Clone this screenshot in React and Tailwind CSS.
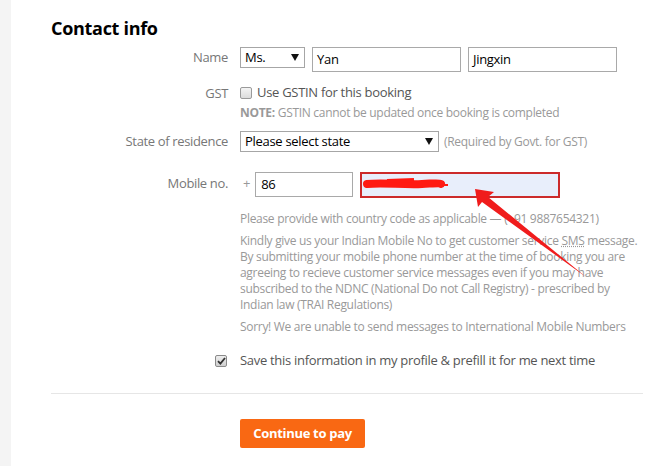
import React from "react";

const font = { fontFamily: '"Open Sans", "Noto Sans", sans-serif' };

function Caret() {
  return (
    <svg width="8" height="7" viewBox="0 0 8 7" className="shrink-0">
      <path d="M0 0 L8 0 L4 7 Z" fill="#111" />
    </svg>
  );
}

function Label({ children, className = "" }) {
  return (
    <div className={"text-right text-[13px] text-[#777] tracking-[-0.35px] " + className}>{children}</div>
  );
}

export default function App() {
  return (
    <div className="relative w-[670px] h-[466px] bg-white overflow-hidden flex tracking-[-0.3px]" style={font}>
      <div className="w-[11px] h-full bg-[#f4f4f4] shrink-0" />
      <div className="flex-1 pl-[40px] pr-[27px]">
        <h2 className="mt-[15px] text-[18px] leading-[26px] font-bold text-black tracking-[-0.3px]">Contact info</h2>

        <div className="grid grid-cols-[177px_1fr] gap-x-3 mt-[6px]">
          {/* Name */}
          <Label className="leading-[21px]">Name</Label>
          <div className="flex items-start">
            <div className="w-[65px] h-[21px] border border-[#a6a6a6] flex items-center justify-between pl-[4px] pr-[5px] text-[13px] text-black">
              <span>Ms.</span>
              <Caret />
            </div>
            <div className="ml-[7px] w-[149px] h-[25px] border border-[#a9a9a9] flex items-center pl-[4px] text-[13px] text-black">Yan</div>
            <div className="ml-[7px] w-[149px] h-[25px] border border-[#a9a9a9] flex items-center pl-[4px] text-[13px] text-black">Jingxin</div>
          </div>

          {/* GST */}
          <Label className="mt-[11px] leading-[20px]">GST</Label>
          <div className="mt-[11px]">
            <div className="flex items-center h-[20px]">
              <div className="w-[12px] h-[12px] rounded-[2px] border border-[#9a9a9a] bg-gradient-to-b from-[#f4f4f4] to-[#dcdcdc]" />
              <span className="ml-[5px] text-[13px] text-[#555]">Use GSTIN for this booking</span>
            </div>
            <div className="text-[12px] leading-[20px] text-[#999]">
              <span className="font-bold">NOTE:</span> GSTIN cannot be updated once booking is completed
            </div>
          </div>

          {/* State */}
          <Label className="mt-[8px] leading-[21px]">State of residence</Label>
          <div className="mt-[8px] flex items-center">
            <div className="w-[199px] h-[21px] border border-[#a6a6a6] flex items-center justify-between pl-[4px] pr-[5px] text-[13px] text-black">
              <span>Please select state</span>
              <Caret />
            </div>
            <span className="ml-[5px] text-[12px] text-[#999]">(Required by Govt. for GST)</span>
          </div>

          {/* Mobile */}
          <Label className="mt-[20px] leading-[22px]">Mobile no.</Label>
          <div className="mt-[20px]">
            <div className="flex items-start">
              <span className="text-[13px] text-[#999] leading-[22px] ml-[3px]">+</span>
              <div className="ml-[5px] w-[98px] h-[25px] border border-[#a9a9a9] flex items-center pl-[5px] text-[13px] text-black">86</div>
              <div className="relative ml-[7px] w-[200px] h-[26px] border-2 border-[#cc2a2a] bg-[#e8eefb]">
                <svg className="absolute left-0 top-0" width="196" height="22" viewBox="0 0 196 22">
                  <path d="M5 10 C20 8, 40 11, 60 10 S 76 9, 79 10" stroke="#ff1a12" strokeWidth="8" fill="none" strokeLinecap="round" />
                  <path d="M25 7 L52 6" stroke="#ff1a12" strokeWidth="4" fill="none" />
                  <path d="M76 11 L86 11" stroke="#ff1a12" strokeWidth="2" fill="none" />
                </svg>
              </div>
            </div>
            <div className="mt-[13px] text-[12px] leading-[16px] text-[#999] whitespace-nowrap">
              Please provide with country code as applicable — (+91 9887654321)
            </div>
            <div className="mt-[6px] text-[12px] leading-[16px] text-[#999] whitespace-nowrap">
              Kindly give us your Indian Mobile No to get customer service{" "}
              <span className="underline decoration-dotted">SMS</span> message.
              <br />
              By submitting your mobile phone number at the time of booking you are
              <br />
              agreeing to recieve customer service messages even if you may have
              <br />
              subscribed to the NDNC (National Do not Call Registry) - prescribed by
              <br />
              Indian law (TRAI Regulations)
            </div>
            <div className="mt-[6px] text-[12px] leading-[16px] text-[#999] whitespace-nowrap">
              Sorry! We are unable to send messages to International Mobile Numbers
            </div>
          </div>

          {/* Save */}
          <div className="mt-[16px] flex justify-end items-center h-[20px]">
            <div className="w-[12px] h-[12px] rounded-[2px] border border-[#8a8a8a] bg-gradient-to-b from-[#eee] to-[#cfcfcf] flex items-center justify-center mr-[1px]">
              <svg width="9" height="8" viewBox="0 0 9 8">
                <path d="M1 4.2 L3.4 6.6 L8 1" stroke="#333" strokeWidth="1.8" fill="none" />
              </svg>
            </div>
          </div>
          <div className="mt-[16px] h-[20px] flex items-center text-[13px] text-[#555]">
            Save this information in my profile &amp; prefill it for me next time
          </div>
        </div>

        <div className="mt-[22px] h-px bg-[#e6e6e6]" />

        <div className="mt-[25px] pl-[189px]">
          <button className="w-[125px] h-[29px] rounded-[2px] bg-[#f96813] text-white text-[13px] font-bold">Continue to pay</button>
        </div>
      </div>

      <svg className="absolute left-0 top-0 pointer-events-none" width="670" height="466" viewBox="0 0 670 466">
        <polygon points="475,189 494,192 488,197 586,277 482,202 478,207" fill="#f01c1c" />
      </svg>
    </div>
  );
}
